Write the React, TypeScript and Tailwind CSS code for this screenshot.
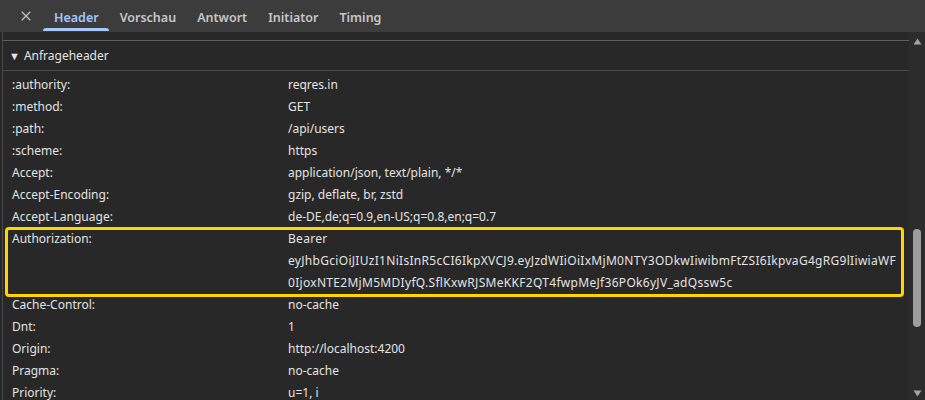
import { X } from "lucide-react";

const TABS = ["Header", "Vorschau", "Antwort", "Initiator", "Timing"];

const HEADERS_BEFORE: [string, string][] = [
  [":authority:", "reqres.in"],
  [":method:", "GET"],
  [":path:", "/api/users"],
  [":scheme:", "https"],
  ["Accept:", "application/json, text/plain, */*"],
  ["Accept-Encoding:", "gzip, deflate, br, zstd"],
  ["Accept-Language:", "de-DE,de;q=0.9,en-US;q=0.8,en;q=0.7"],
];

const HEADERS_AFTER: [string, string][] = [
  ["Cache-Control:", "no-cache"],
  ["Dnt:", "1"],
  ["Origin:", "http://localhost:4200"],
  ["Pragma:", "no-cache"],
  ["Priority:", "u=1, i"],
];

const TOKEN_LINES = [
  "Bearer",
  "eyJhbGciOiJIUzI1NiIsInR5cCI6IkpXVCJ9.eyJzdWIiOiIxMjM0NTY3ODkwIiwibmFtZSI6IkpvaG4gRG9lIiwiaWF",
  "0IjoxNTE2MjM5MDIyfQ.SflKxwRJSMeKKF2QT4fwpMeJf36POk6yJV_adQssw5c",
];

function HeaderRow({ name, value }: { name: string; value: string }) {
  return (
    <div className="flex h-[22px] items-center">
      <span className="w-[285px] shrink-0 pl-[9px]">{name}</span>
      <span className="whitespace-nowrap">{value}</span>
    </div>
  );
}

export default function App() {
  return (
    <div
      className="flex h-[400px] w-[925px] flex-col overflow-hidden bg-[#282828] text-[12px] text-[#e3e3e3]"
      style={{ fontFamily: '"Noto Sans", "Open Sans", sans-serif' }}
    >
      {/* tab strip */}
      <div className="flex h-[32px] shrink-0 items-stretch border-b border-[#3c3c3c] bg-[#3c3c3c] pl-[17px]">
        <button type="button" className="flex w-[17px] items-center justify-center text-[#c7c7c7]">
          <X size={16} strokeWidth={1.6} />
        </button>
        <div className="ml-[9px] flex items-stretch">
          {TABS.map((tab, i) => (
            <div
              key={tab}
              className={
                i === 0
                  ? "relative flex items-center pl-[11px] pr-[10px] pt-[6px] text-[12.5px] font-semibold text-[#a8c7fa]"
                  : "relative flex items-center pl-[11px] pr-[10px] pt-[6px] text-[12.5px] font-semibold text-[#c7c7c7]"
              }
            >
              {tab}
              {i === 0 && (
                <span className="absolute bottom-0 left-0 right-0 h-[3px] rounded-t-[3px] bg-[#a8c7fa]" />
              )}
            </div>
          ))}
        </div>
      </div>

      <div className="flex min-h-0 flex-1">
        {/* content */}
        <div className="ml-[2px] flex min-w-0 flex-1 flex-col border-l border-[#4a4a4a]">
          <div className="h-[9px] shrink-0 border-b border-[#5e5e5e]" />
          <div className="flex h-[30px] shrink-0 items-center gap-[4px] border-b border-[#4a4a4a] pl-[6px] pt-[1px]">
            <span className="text-[11px] text-[#e3e3e3]">▼</span>
            <span>Anfrageheader</span>
          </div>
          <div className="pt-[3px]">
            {HEADERS_BEFORE.map(([k, v]) => (
              <HeaderRow key={k} name={k} value={v} />
            ))}
            <div className="relative flex">
              <span className="w-[285px] shrink-0 pl-[9px] leading-[22px]">Authorization:</span>
              <div className="flex flex-col">
                {TOKEN_LINES.map((line) => (
                  <span key={line} className="whitespace-nowrap leading-[22px] tracking-[0.3px]">
                    {line}
                  </span>
                ))}
              </div>
              <div className="pointer-events-none absolute -top-[1px] -bottom-[3px] left-[2px] right-[5px] rounded-[4px] border-[3px] border-[#ffd400]" />
            </div>
            {HEADERS_AFTER.map(([k, v]) => (
              <HeaderRow key={k} name={k} value={v} />
            ))}
          </div>
        </div>

        {/* scrollbar */}
        <div className="relative w-[16px] shrink-0 bg-[#2c2c2c]">
          <svg className="absolute left-[4px] top-[6px]" width="9" height="7" viewBox="0 0 9 7">
            <path d="M4.5 0.5 L8.5 6.5 L0.5 6.5 Z" fill="#a3a3a3" />
          </svg>
          <div className="absolute left-[4px] top-[197px] h-[98px] w-[8px] rounded-full bg-[#9e9e9e]" />
          <svg className="absolute bottom-[3px] left-[4px]" width="9" height="7" viewBox="0 0 9 7">
            <path d="M0.5 0.5 L8.5 0.5 L4.5 6.5 Z" fill="#a3a3a3" />
          </svg>
        </div>
      </div>
    </div>
  );
}
